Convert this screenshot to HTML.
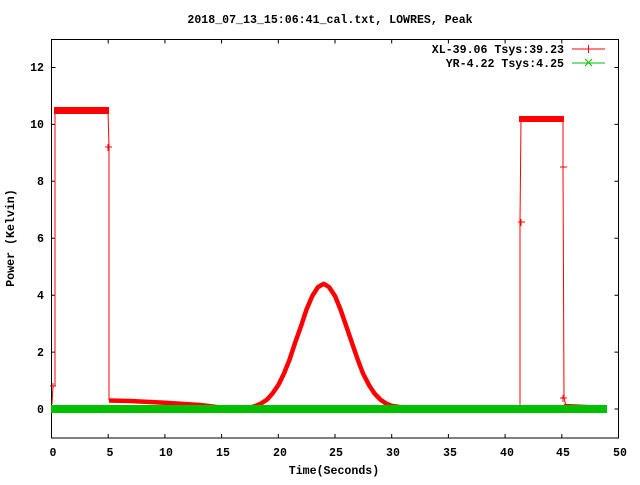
<!DOCTYPE html>
<html><head><style>
html,body{margin:0;padding:0;background:#fff;}
svg text{font-family:"Liberation Mono",monospace;font-weight:bold;font-size:11.6px;fill:#000;}
</style></head><body>
<svg width="640" height="480" viewBox="0 0 640 480" xmlns="http://www.w3.org/2000/svg">
<rect width="640" height="480" fill="#fff"/>
<text x="330" y="23" text-anchor="middle">2018_07_13_15:06:41_cal.txt, LOWRES, Peak</text>
<rect x="51.5" y="39.5" width="567" height="398.5" fill="none" stroke="#000" stroke-width="1"/>
<g stroke="#000" stroke-width="1">
<path d="M51.5 409h4M51.5 352.1h4M51.5 295.2h4M51.5 238.2h4M51.5 181.3h4M51.5 124.4h4M51.5 67.5h4
M618.5 409h-4M618.5 352.1h-4M618.5 295.2h-4M618.5 238.2h-4M618.5 181.3h-4M618.5 124.4h-4M618.5 67.5h-4
M108.2 438v-4M164.9 438v-4M221.6 438v-4M278.3 438v-4M335 438v-4M391.7 438v-4M448.4 438v-4M505.1 438v-4M561.8 438v-4
M108.2 39.5v4M164.9 39.5v4M221.6 39.5v4M278.3 39.5v4M335 39.5v4M391.7 39.5v4M448.4 39.5v4M505.1 39.5v4M561.8 39.5v4"/>
</g>
<g text-anchor="end">
<text x="44" y="413">0</text><text x="44" y="356">2</text><text x="44" y="299">4</text>
<text x="44" y="242">6</text><text x="44" y="185">8</text><text x="44" y="128">10</text><text x="44" y="71">12</text>
</g>
<g text-anchor="middle">
<text x="53" y="456">0</text><text x="110" y="456">5</text><text x="166" y="456">10</text><text x="223" y="456">15</text>
<text x="280" y="456">20</text><text x="336" y="456">25</text><text x="393" y="456">30</text><text x="450" y="456">35</text>
<text x="507" y="456">40</text><text x="563" y="456">45</text><text x="620" y="456">50</text>
<text x="334" y="474">Time(Seconds)</text>
<text transform="translate(14,238) rotate(-90)">Power (Kelvin)</text>
</g>
<g stroke="#f00" fill="none" stroke-linejoin="round">
<path stroke-width="1" d="M52 404L53 386L55 386L55 110L108 110L109 147L109 400M520 406L520 222L521 119L563 119L563 167L564 398L566 406"/>
<rect x="54" y="107" width="55" height="7" fill="#f00" stroke="none"/>
<rect x="519" y="116" width="45" height="6" fill="#f00" stroke="none"/>
<path stroke-width="4.5" d="M109 400.5L130 401L165 402.7L200 405L221.6 407.6L244 408.5L250 407.5L255.6 405.9L261 403.5L267 399.6L272.5 393.5L278.3 385.1L284 373.5L289.6 359.5L295 343L301 326.2L306.5 309.5L312.3 296L318 287L323.7 283.8L329 287L335 296L340.5 309.5L346.3 326.2L352 343L357.7 359.5L363 373.5L369 385.1L374.5 393.5L380.4 399.6L386 403.5L391.7 405.9L403 407.5L450 407.8L519 407.5M564 406L606 408"/>
<path stroke-width="1" d="M50 386h6M53 383v6M105 147h7M108 144v7M518 222h7M521 219v7M560 167h7M563 164v7M560 398h7M563 395v7"/>
</g>
<rect x="51" y="405" width="556" height="8" fill="#00c000"/>
<text x="564" y="53" text-anchor="end">XL-39.06 Tsys:39.23</text>
<text x="564" y="67" text-anchor="end">YR-4.22 Tsys:4.25</text>
<path d="M572 49h33M588.5 45v8" stroke="#f00" stroke-width="1"/>
<path d="M572 63h33M585 59l7 7M592 59l-7 7" stroke="#00c000" stroke-width="1"/>
</svg>
</body></html>
